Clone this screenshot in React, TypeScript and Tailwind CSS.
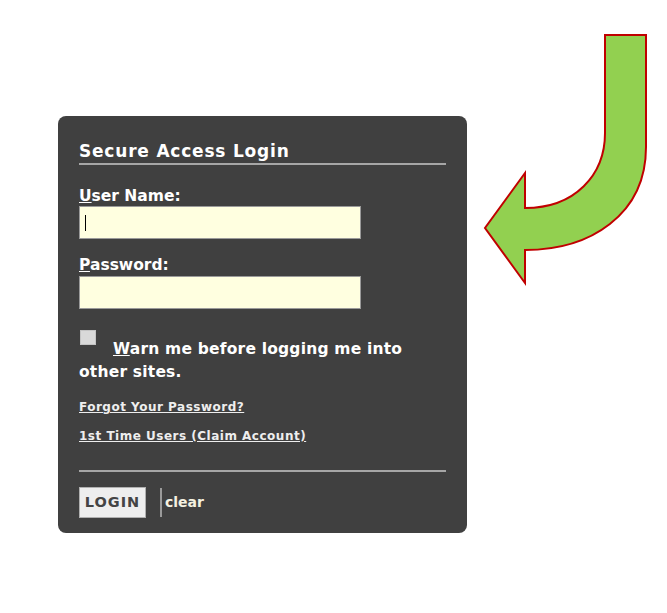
export default function App() {
  const font = { fontFamily: '"DejaVu Sans", Verdana, sans-serif' }
  return (
    <div className="relative w-[667px] h-[613px] bg-white" style={font}>
      <svg className="absolute left-0 top-0" width="667" height="613">
        <path
          d="M605,35 L646,35 L646,147 C646,215 590,250 525,250 L525,283 L485,228 L525,173 L525,208 C575,208 605,175 605,133 Z"
          fill="#92d050"
          stroke="#c00000"
          strokeWidth="2"
        />
      </svg>

      <div className="pt-[116px] pl-[58px]">
        <div className="w-[409px] h-[417px] rounded-[8px] bg-[#404040] px-[21px] pt-[25px] text-white">
          <div className="text-[17px] font-bold leading-[20px] tracking-[0.8px] border-b-2 border-[#a6a6a6] pb-[2px]">
            Secure Access Login
          </div>

          <div className="mt-[22px] text-[15.5px] font-bold leading-[18px]">
            <span className="underline">U</span>ser Name:
          </div>
          <div className="mt-[1px] w-[282px] h-[33px] bg-[#ffffe0] border border-[#9a9a9a] flex items-center pl-[5px]">
            <div className="w-px h-[16px] bg-black" />
          </div>

          <div className="mt-[17px] text-[15.5px] font-bold leading-[18px]">
            <span className="underline">P</span>assword:
          </div>
          <div className="mt-[2px] w-[282px] h-[33px] bg-[#ffffe0] border border-[#9a9a9a]" />

          <div className="mt-[29px] text-[15.5px] font-bold leading-[23px] tracking-[0.2px]">
            <span className="relative -top-[9px] inline-block w-[16px] h-[15px] bg-[#d9d9d9] border border-[#c4c4c4] align-baseline ml-[1px] mr-[17px]" />
            <span className="underline">W</span>arn me before logging me into other sites.
          </div>

          <div className="mt-[16px] text-[12px] font-bold leading-[14px] tracking-[0.5px] underline text-[#eeeeee]">
            Forgot Your Password?
          </div>
          <div className="mt-[15px] text-[12px] font-bold leading-[14px] tracking-[0.5px] underline text-[#eeeeee]">
            1st Time Users (Claim Account)
          </div>

          <div className="mt-[27px] border-t-2 border-[#a6a6a6]" />

          <div className="mt-[15px] flex items-center">
            <div className="w-[67px] h-[31px] bg-[#eeeeee] border border-[#b0b0b0] flex items-center justify-center text-[14.5px] font-semibold tracking-[1px] text-[#444]">
              LOGIN
            </div>
            <div className="ml-[14px] w-[2px] h-[29px] bg-[#9a9a9a]" />
            <span className="ml-[3px] text-[14px] font-bold text-[#f4f1e0]">clear</span>
          </div>
        </div>
      </div>
    </div>
  )
}
